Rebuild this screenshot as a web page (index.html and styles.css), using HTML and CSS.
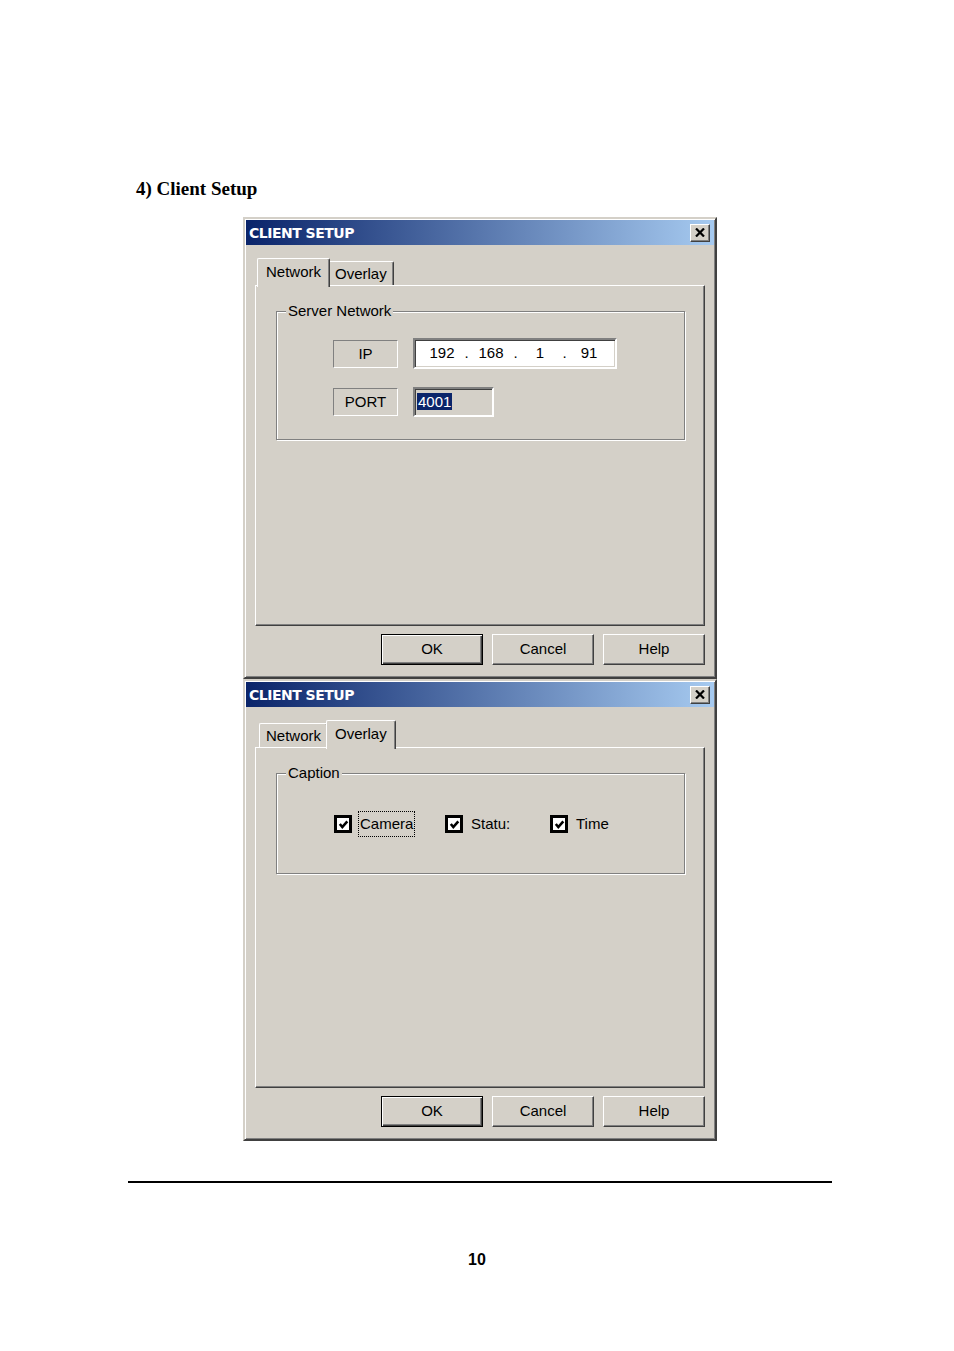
FILE: index.html
```html
<!DOCTYPE html>
<html>
<head>
<meta charset="utf-8">
<link rel="stylesheet" href="styles.css">
</head>
<body>
<div class="page">
  <h2 class="heading">4) Client Setup</h2>
  <div class="dialogs">
    <div class="dialog">
      <div class="titlebar">
        <span class="title">CLIENT SETUP</span>
        <span class="close"><svg width="10" height="9" viewBox="0 0 10 9"><path d="M1 0.5 L9 8.5 M9 0.5 L1 8.5" stroke="#000" stroke-width="2.2" fill="none"/></svg></span>
      </div>
      <div class="dlg-body">
        <div class="tabs">
          <div class="tab active">Network</div>
          <div class="tab">Overlay</div>
        </div>
        <div class="panel">
          <div class="group">
            <div class="caption">Server Network</div>
            <div class="net-grid">
              <div class="static">IP</div>
              <div class="ip-box">
                <span class="oct">192</span><span class="dot">.</span><span class="oct">168</span><span class="dot">.</span><span class="oct">1</span><span class="dot">.</span><span class="oct">91</span>
              </div>
              <div class="static">PORT</div>
              <div class="port-box"><span class="sel">4001</span></div>
            </div>
          </div>
        </div>
        <div class="buttons">
          <button class="btn default">OK</button>
          <button class="btn">Cancel</button>
          <button class="btn">Help</button>
        </div>
      </div>
    </div>

    <div class="dialog">
      <div class="titlebar">
        <span class="title">CLIENT SETUP</span>
        <span class="close"><svg width="10" height="9" viewBox="0 0 10 9"><path d="M1 0.5 L9 8.5 M9 0.5 L1 8.5" stroke="#000" stroke-width="2.2" fill="none"/></svg></span>
      </div>
      <div class="dlg-body">
        <div class="tabs">
          <div class="tab">Network</div>
          <div class="tab active">Overlay</div>
        </div>
        <div class="panel">
          <div class="group">
            <div class="caption">Caption</div>
            <div class="checks">
              <div class="check-item">
                <span class="box"><svg width="11" height="11" viewBox="0 0 11 11"><path d="M1.8 5 L4.3 8 L9.3 2.3" stroke="#000" stroke-width="2.6" fill="none"/></svg></span>
                <span class="lbl focus">Camera</span>
              </div>
              <div class="check-item">
                <span class="box"><svg width="11" height="11" viewBox="0 0 11 11"><path d="M1.8 5 L4.3 8 L9.3 2.3" stroke="#000" stroke-width="2.6" fill="none"/></svg></span>
                <span class="lbl">Statu:</span>
              </div>
              <div class="check-item">
                <span class="box"><svg width="11" height="11" viewBox="0 0 11 11"><path d="M1.8 5 L4.3 8 L9.3 2.3" stroke="#000" stroke-width="2.6" fill="none"/></svg></span>
                <span class="lbl">Time</span>
              </div>
            </div>
          </div>
        </div>
        <div class="buttons">
          <button class="btn default">OK</button>
          <button class="btn">Cancel</button>
          <button class="btn">Help</button>
        </div>
      </div>
    </div>
  </div>
  <div class="rule"></div>
  <div class="pagenum">10</div>
</div>
</body>
</html>
```
FILE: styles.css
```css
html, body {
  margin: 0;
  padding: 0;
  background: #fff;
}

.page {
  width: 954px;
  display: flex;
  flex-direction: column;
}

.heading {
  margin: 178px 0 0 136px;
  font-family: "Liberation Serif", serif;
  font-weight: bold;
  font-size: 19px;
  line-height: 22px;
  color: #000;
}

.dialogs {
  margin: 17px 0 0 243px;
  display: flex;
  flex-direction: column;
}

.dialog {
  width: 474px;
  height: 462px;
  box-sizing: border-box;
  background: #d4d0c8;
  border: 2px solid;
  border-color: #d4d0c8 #404040 #404040 #d4d0c8;
  padding: 1px;
  box-shadow: inset 1px 1px 0 #fff, inset -1px -1px 0 #808080;
  display: flex;
  flex-direction: column;
  font-family: "Liberation Sans", Arial, sans-serif;
  font-size: 15px;
  color: #000;
}

.titlebar {
  height: 25px;
  flex: none;
  background: linear-gradient(to right, #0a246a, #a6caf0);
  display: flex;
  align-items: center;
  justify-content: space-between;
  padding: 0 4px 0 3px;
}

.title {
  font-family: "DejaVu Sans", sans-serif;
  font-weight: bold;
  font-size: 14px;
  letter-spacing: -0.5px;
  color: #fff;
  line-height: 17px;
  padding-top: 1px;
}

.close {
  width: 20px;
  height: 18px;
  box-sizing: border-box;
  background: #d4d0c8;
  border: 1px solid;
  border-color: #fff #404040 #404040 #fff;
  box-shadow: inset -1px -1px 0 #808080;
  display: flex;
  align-items: center;
  justify-content: center;
}

.close svg { display: block; }

.dlg-body {
  flex: 1;
  padding: 13px 9px 0;
  display: flex;
  flex-direction: column;
}

.tabs {
  height: 27px;
  display: flex;
  align-items: flex-end;
  padding-left: 4px;
}

.tab {
  height: 24px;
  box-sizing: border-box;
  padding: 0 6px;
  border-top: 1px solid #fff;
  border-left: 1px solid #fff;
  border-right: 1px solid #404040;
  border-radius: 2px 2px 0 0;
  box-shadow: inset -1px 0 0 #808080;
  display: flex;
  align-items: center;
  justify-content: center;
  line-height: 18px;
}

.tab.active {
  height: 29px;
  padding: 0 8px 3px;
  margin: 0 -2px -2px;
  position: relative;
  z-index: 1;
  background: #d4d0c8;
}

.panel {
  height: 341px;
  box-sizing: border-box;
  border: 1px solid;
  border-color: #fff #404040 #404040 #fff;
  box-shadow: inset -1px -1px 0 #808080;
  padding: 16px 19px 0 20px;
}

.group {
  margin-top: 9px;
  border: 1px solid #808080;
  box-shadow: inset 1px 1px 0 #fff, 1px 1px 0 #fff;
  padding: 0 0 22px 9px;
}

.caption {
  width: fit-content;
  margin-top: -10px;
  padding: 0 2px;
  background: #d4d0c8;
  line-height: 18px;
}

.net-grid {
  margin: 18px 0 0 47px;
  display: grid;
  grid-template-columns: 65px auto;
  column-gap: 15px;
  row-gap: 18px;
  align-items: center;
  justify-items: start;
}

.static {
  width: 65px;
  height: 28px;
  box-sizing: border-box;
  border: 1px solid;
  border-color: #808080 #fff #fff #808080;
  display: flex;
  align-items: center;
  justify-content: center;
  line-height: 18px;
}

.ip-box, .port-box {
  box-sizing: border-box;
  border: 2px solid;
  border-color: #808080 #fff #fff #808080;
  box-shadow: inset 1px 1px 0 #404040, inset -1px -1px 0 #d4d0c8;
  display: flex;
  align-items: center;
  line-height: 18px;
}

.ip-box {
  width: 204px;
  height: 31px;
  background: #fff;
  padding: 0 0 2px 7px;
}

.oct {
  width: 40px;
  text-align: center;
}

.dot {
  width: 9px;
  text-align: center;
}

.port-box {
  width: 81px;
  height: 30px;
  background: #d4d0c8;
  padding: 0 0 1px 2px;
}

.sel {
  background: #0a246a;
  color: #fff;
  padding: 0 1px;
  line-height: 17px;
}

.checks {
  margin: 29px 0 0 48px;
  display: grid;
  grid-template-columns: 111px 105px auto;
  align-items: center;
  padding-bottom: 14px;
}

.check-item {
  height: 26px;
  display: flex;
  align-items: center;
  gap: 6px;
}

.box {
  width: 18px;
  height: 18px;
  box-sizing: border-box;
  border: 3px solid #000;
  background: #fff;
  display: flex;
  align-items: center;
  justify-content: center;
}

.box svg { display: block; }

.lbl {
  line-height: 18px;
  border: 1px solid transparent;
  padding: 3px 1px;
}

.lbl.focus {
  border: 1px dotted #000;
}

.buttons {
  margin-top: 8px;
  display: flex;
  justify-content: flex-end;
  gap: 9px;
}

.btn {
  width: 102px;
  height: 31px;
  box-sizing: border-box;
  margin: 0;
  padding: 0 0 2px;
  background: #d4d0c8;
  border: 1px solid;
  border-color: #fff #404040 #404040 #fff;
  box-shadow: inset -1px -1px 0 #808080;
  font-family: "Liberation Sans", Arial, sans-serif;
  font-size: 15px;
  color: #000;
  border-radius: 0;
}

.btn.default {
  border-color: #000;
  box-shadow: inset 1px 1px 0 #fff, inset -1px -1px 0 #404040, inset -2px -2px 0 #808080;
}

.rule {
  margin: 40px 0 0 128px;
  width: 704px;
  height: 2px;
  background: #000;
}

.pagenum {
  margin-top: 68px;
  text-align: center;
  font-family: "Liberation Sans", Arial, sans-serif;
  font-weight: bold;
  font-size: 16px;
  line-height: 18px;
  color: #000;
}
```
